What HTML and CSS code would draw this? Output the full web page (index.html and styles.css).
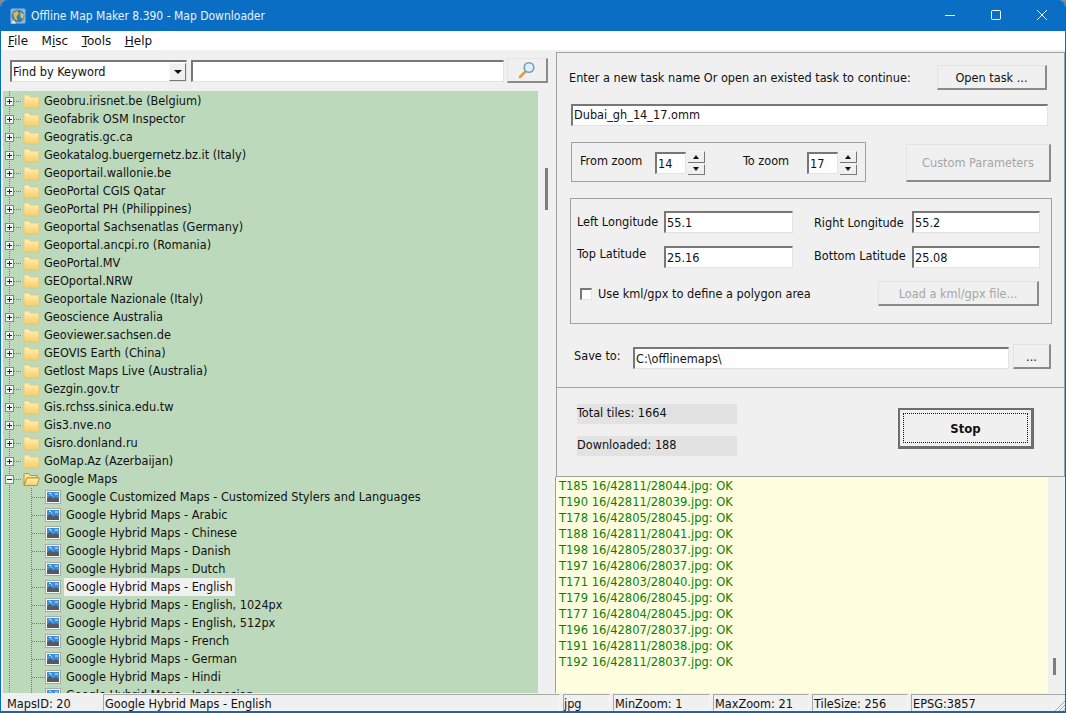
FILE: index.html
```html
<!DOCTYPE html>
<html lang="en">
<head>
    <meta charset="UTF-8">
    <title>Offline Map Maker 8.390 - Map Downloader</title>
    <link rel="stylesheet" href="styles.css">
</head>
<body>
    <svg class="defs" width="0" height="0">
        <defs>
            <linearGradient id="folder-fill" x1="0" y1="0" x2="0" y2="1">
                <stop offset="0" stop-color="#fff1bd"/>
                <stop offset="1" stop-color="#f8cd66"/>
            </linearGradient>
            <symbol id="folder" viewBox="0 0 17 15">
                <path d="M1 3.5 L1 2 Q1 1 2 1 L6 1 L7.5 3 L15 3 Q16 3 16 4 L16 13 Q16 14 15 14 L2 14 Q1 14 1 13 Z" fill="url(#folder-fill)" stroke="#e8c064" stroke-width=".7"/>
            </symbol>
            <symbol id="folder-open" viewBox="0 0 17 15">
                <path d="M1 13 L1 2.5 Q1 1.5 2 1.5 L6 1.5 L7.5 3.5 L14 3.5 L14 6 L4 6 Z" fill="#fbe39a" stroke="#c08a1e" stroke-width=".9"/>
                <path d="M1 13.5 L4 6 L16.5 6 L14 13.5 Z" fill="url(#folder-fill)" stroke="#c08a1e" stroke-width=".9"/>
            </symbol>
            <symbol id="map" viewBox="0 0 16 14">
                <rect x=".5" y=".5" width="15" height="13" fill="#f6f6f6" stroke="#a8a8a8"/>
                <rect x="2" y="2" width="12" height="10" fill="#3f8fd8"/>
                <path d="M4 3.5h2M10 4h3M6 5h1" stroke="#e2f2fd" stroke-width="1"/>
                <path d="M2 12 L2 8.5 L5 6 L8 8.5 L11 7 L14 9 L14 12 Z" fill="#55585c"/>
            </symbol>
        </defs>
    </svg>

    <div class="window">
        <header class="titlebar">
            <svg class="app-icon" width="16" height="16" viewBox="0 0 16 16">
                <rect x=".5" y=".5" width="15" height="15" rx="1.5" fill="#8fb6d2"/>
                <circle cx="8" cy="8" r="6.3" fill="#2f7fb8"/>
                <path d="M3 5.5 L7 2.5 L9 5.5 L6.5 8.5 L7.5 13 L4.5 11 Z" fill="#e2b544"/>
                <path d="M10 4 L14 6.5 L13 11 L10.5 9.5 Z" fill="#d8c25a"/>
                <path d="M.5 15.5 L4 12 L6 15.5 Z" fill="#f0e8c0"/>
            </svg>
            <span class="title-text">Offline Map Maker 8.390 - Map Downloader</span>
            <div class="window-buttons">
                <svg width="46" height="31" viewBox="0 0 46 31"><path d="M18 15.5h10" stroke="#fff"/></svg>
                <svg width="46" height="31" viewBox="0 0 46 31"><rect x="18.5" y="10.5" width="9" height="9" rx="1" fill="none" stroke="#fff"/></svg>
                <svg width="46" height="31" viewBox="0 0 46 31"><path d="M18 10 L28 20 M28 10 L18 20" stroke="#fff"/></svg>
            </div>
        </header>

        <nav class="menubar">
            <span><u>F</u>ile</span>
            <span>M<u>i</u>sc</span>
            <span><u>T</u>ools</span>
            <span><u>H</u>elp</span>
        </nav>

        <main class="content">
            <section class="left-pane">
                <div class="search-bar">
                    <div class="combo">
                        <span class="combo-text">Find by Keyword</span>
                        <span class="combo-arrow"></span>
                    </div>
                    <input class="field search-field" type="text">
                    <button class="btn search-btn">
                        <svg width="18" height="18" viewBox="0 0 18 18">
                            <path d="M2 16 L7 11" stroke="#e8993f" stroke-width="2.6" stroke-linecap="round"/>
                            <circle cx="11" cy="6.5" r="4.8" fill="#dcf0fb" stroke="#6f9fc0" stroke-width="1.6"/>
                        </svg>
                    </button>
                </div>
                <div class="tree-area">
                    <ul class="tree">
                        <li class="node"><span class="exp plus"></span><svg class="ico"><use href="#folder"/></svg><span class="lbl">Geobru.irisnet.be (Belgium)</span></li>
                        <li class="node"><span class="exp plus"></span><svg class="ico"><use href="#folder"/></svg><span class="lbl">Geofabrik OSM Inspector</span></li>
                        <li class="node"><span class="exp plus"></span><svg class="ico"><use href="#folder"/></svg><span class="lbl">Geogratis.gc.ca</span></li>
                        <li class="node"><span class="exp plus"></span><svg class="ico"><use href="#folder"/></svg><span class="lbl">Geokatalog.buergernetz.bz.it (Italy)</span></li>
                        <li class="node"><span class="exp plus"></span><svg class="ico"><use href="#folder"/></svg><span class="lbl">Geoportail.wallonie.be</span></li>
                        <li class="node"><span class="exp plus"></span><svg class="ico"><use href="#folder"/></svg><span class="lbl">GeoPortal CGIS Qatar</span></li>
                        <li class="node"><span class="exp plus"></span><svg class="ico"><use href="#folder"/></svg><span class="lbl">GeoPortal PH (Philippines)</span></li>
                        <li class="node"><span class="exp plus"></span><svg class="ico"><use href="#folder"/></svg><span class="lbl">Geoportal Sachsenatlas (Germany)</span></li>
                        <li class="node"><span class="exp plus"></span><svg class="ico"><use href="#folder"/></svg><span class="lbl">Geoportal.ancpi.ro (Romania)</span></li>
                        <li class="node"><span class="exp plus"></span><svg class="ico"><use href="#folder"/></svg><span class="lbl">GeoPortal.MV</span></li>
                        <li class="node"><span class="exp plus"></span><svg class="ico"><use href="#folder"/></svg><span class="lbl">GEOportal.NRW</span></li>
                        <li class="node"><span class="exp plus"></span><svg class="ico"><use href="#folder"/></svg><span class="lbl">Geoportale Nazionale (Italy)</span></li>
                        <li class="node"><span class="exp plus"></span><svg class="ico"><use href="#folder"/></svg><span class="lbl">Geoscience Australia</span></li>
                        <li class="node"><span class="exp plus"></span><svg class="ico"><use href="#folder"/></svg><span class="lbl">Geoviewer.sachsen.de</span></li>
                        <li class="node"><span class="exp plus"></span><svg class="ico"><use href="#folder"/></svg><span class="lbl">GEOVIS Earth (China)</span></li>
                        <li class="node"><span class="exp plus"></span><svg class="ico"><use href="#folder"/></svg><span class="lbl">Getlost Maps Live (Australia)</span></li>
                        <li class="node"><span class="exp plus"></span><svg class="ico"><use href="#folder"/></svg><span class="lbl">Gezgin.gov.tr</span></li>
                        <li class="node"><span class="exp plus"></span><svg class="ico"><use href="#folder"/></svg><span class="lbl">Gis.rchss.sinica.edu.tw</span></li>
                        <li class="node"><span class="exp plus"></span><svg class="ico"><use href="#folder"/></svg><span class="lbl">Gis3.nve.no</span></li>
                        <li class="node"><span class="exp plus"></span><svg class="ico"><use href="#folder"/></svg><span class="lbl">Gisro.donland.ru</span></li>
                        <li class="node"><span class="exp plus"></span><svg class="ico"><use href="#folder"/></svg><span class="lbl">GoMap.Az (Azerbaijan)</span></li>
                        <li class="node"><span class="exp minus"></span><svg class="ico"><use href="#folder-open"/></svg><span class="lbl">Google Maps</span></li>
                        <li class="node child"><svg class="ico"><use href="#map"/></svg><span class="lbl">Google Customized Maps - Customized Stylers and Languages</span></li>
                        <li class="node child"><svg class="ico"><use href="#map"/></svg><span class="lbl">Google Hybrid Maps - Arabic</span></li>
                        <li class="node child"><svg class="ico"><use href="#map"/></svg><span class="lbl">Google Hybrid Maps - Chinese</span></li>
                        <li class="node child"><svg class="ico"><use href="#map"/></svg><span class="lbl">Google Hybrid Maps - Danish</span></li>
                        <li class="node child"><svg class="ico"><use href="#map"/></svg><span class="lbl">Google Hybrid Maps - Dutch</span></li>
                        <li class="node child selected"><svg class="ico"><use href="#map"/></svg><span class="lbl">Google Hybrid Maps - English</span></li>
                        <li class="node child"><svg class="ico"><use href="#map"/></svg><span class="lbl">Google Hybrid Maps - English, 1024px</span></li>
                        <li class="node child"><svg class="ico"><use href="#map"/></svg><span class="lbl">Google Hybrid Maps - English, 512px</span></li>
                        <li class="node child"><svg class="ico"><use href="#map"/></svg><span class="lbl">Google Hybrid Maps - French</span></li>
                        <li class="node child"><svg class="ico"><use href="#map"/></svg><span class="lbl">Google Hybrid Maps - German</span></li>
                        <li class="node child"><svg class="ico"><use href="#map"/></svg><span class="lbl">Google Hybrid Maps - Hindi</span></li>
                        <li class="node child"><svg class="ico"><use href="#map"/></svg><span class="lbl">Google Hybrid Maps - Indonesian</span></li>
                    </ul>
                    <div class="scroll-track"><div class="tree-thumb"></div></div>
                </div>
            </section>

            <section class="right-pane">
                <div class="task-panel">
                    <div class="task-head">
                        <span>Enter a new task name Or open an existed task to continue:</span>
                        <button class="btn open-btn">Open task ...</button>
                    </div>
                    <input class="field task-name" type="text" value="Dubai_gh_14_17.omm">

                    <div class="zoom-row">
                        <div class="group zoom-group">
                            <span class="from-label">From zoom</span>
                            <input class="field zoom-field" type="text" value="14">
                            <div class="spin"><span class="spin-up"></span><span class="spin-down"></span></div>
                            <span class="to-label">To zoom</span>
                            <input class="field zoom-field" type="text" value="17">
                            <div class="spin"><span class="spin-up"></span><span class="spin-down"></span></div>
                        </div>
                        <button class="btn custom-btn" disabled>Custom Parameters</button>
                    </div>

                    <div class="group coord-group">
                        <div class="coord-grid">
                            <span class="lift-sm">Left Longitude</span>
                            <input class="field coord-field" type="text" value="55.1">
                            <span class="right-col">Right Longitude</span>
                            <input class="field coord-field" type="text" value="55.2">
                            <span class="lift-lg">Top Latitude</span>
                            <input class="field coord-field" type="text" value="25.16">
                            <span class="right-col lift-md">Bottom Latitude</span>
                            <input class="field coord-field" type="text" value="25.08">
                        </div>
                        <div class="poly-row">
                            <label class="check-label"><span class="checkbox"></span>Use kml/gpx to define a polygon area</label>
                            <button class="btn load-btn" disabled>Load a kml/gpx file...</button>
                        </div>
                    </div>

                    <div class="save-row">
                        <span class="save-label">Save to:</span>
                        <input class="field save-field" type="text" value="C:\offlinemaps\">
                        <button class="btn dots-btn">...</button>
                    </div>
                </div>

                <div class="progress-panel">
                    <div class="counts">
                        <div class="count">Total tiles: 1664</div>
                        <div class="count">Downloaded: 188</div>
                    </div>
                    <button class="btn stop-btn"><span>Stop</span></button>
                </div>

                <div class="log-area">
                    <div class="log">
                        <div>T185 16/42811/28044.jpg: OK</div>
                        <div>T190 16/42811/28039.jpg: OK</div>
                        <div>T178 16/42805/28045.jpg: OK</div>
                        <div>T188 16/42811/28041.jpg: OK</div>
                        <div>T198 16/42805/28037.jpg: OK</div>
                        <div>T197 16/42806/28037.jpg: OK</div>
                        <div>T171 16/42803/28040.jpg: OK</div>
                        <div>T179 16/42806/28045.jpg: OK</div>
                        <div>T177 16/42804/28045.jpg: OK</div>
                        <div>T196 16/42807/28037.jpg: OK</div>
                        <div>T191 16/42811/28038.jpg: OK</div>
                        <div>T192 16/42811/28037.jpg: OK</div>
                    </div>
                    <div class="log-scroll"><div class="log-thumb"></div></div>
                </div>
            </section>
        </main>

        <footer class="statusbar">
            <div class="cell plain s-id">MapsID: 20</div>
            <div class="cell s-name">Google Hybrid Maps - English</div>
            <div class="cell s-ext">jpg</div>
            <div class="cell s-min">MinZoom: 1</div>
            <div class="cell s-std">MaxZoom: 21</div>
            <div class="cell s-std">TileSize: 256</div>
            <div class="cell s-last">EPSG:3857
                <svg class="grip" width="11" height="11" viewBox="0 0 11 11"><path d="M1 11 L11 1 M5 11 L11 5 M9 11 L11 9" stroke="#a8a8a8"/></svg>
            </div>
        </footer>
    </div>
</body>
</html>
```

FILE: styles.css
```css
* {
    margin: 0;
    padding: 0;
    box-sizing: border-box;
}

html, body {
    height: 100%;
    overflow: hidden;
}

body {
    background: #8a8a8a;
    font-family: "DejaVu Sans Condensed", "DejaVu Sans", sans-serif;
    font-size: 12.6px;
    color: #111;
}

.defs {
    position: absolute;
}

.window {
    height: 713px;
    display: flex;
    flex-direction: column;
    overflow: hidden;
    background: #f0f0f0;
    border-radius: 7px 7px 0 0;
    border-left: 1px solid #0a6cc0;
    border-right: 1px solid #0a6cc0;
    border-bottom: 2px solid #0a6cc0;
}

/* title bar */
.titlebar {
    height: 31px;
    flex: none;
    display: flex;
    align-items: center;
    background: #0a6fc4;
    color: #fff;
    padding-left: 9px;
}

.app-icon {
    margin-right: 5px;
}

.title-text {
    flex: 1;
    font-size: 12px;
    color: #e8f2fb;
}

.window-buttons {
    display: flex;
}

.menubar {
    height: 19px;
    flex: none;
    background: #fff;
    display: flex;
    gap: 13.5px;
    padding-left: 7px;
    align-items: center;
    font-family: "DejaVu Sans", sans-serif;
    font-size: 12px;
}

.content {
    flex: 1;
    display: flex;
    min-height: 0;
}

/* left side */
.left-pane {
    width: 555px;
    flex: none;
    display: flex;
    flex-direction: column;
}

.search-bar {
    height: 41px;
    flex: none;
    display: flex;
    align-items: flex-start;
    padding: 10px 0 0 9px;
}

.field {
    border: 1px solid #e3e3e3;
    border-top: 2px solid #777;
    border-left: 2px solid #777;
    background: #fff;
    font: inherit;
    color: #111;
    padding: 0 1px;
    outline: none;
    height: 22px;
}

.combo {
    width: 177px;
    height: 22px;
    display: flex;
    align-items: center;
    justify-content: space-between;
    background: #fff;
    border: 1px solid #e3e3e3;
    border-top: 2px solid #777;
    border-left: 2px solid #777;
    padding-left: 1px;
}

.combo-arrow {
    width: 17px;
    height: 18px;
    background: #f0f0f0;
    border: 1px solid #f8f8f8;
    border-right-color: #777;
    border-bottom-color: #777;
    position: relative;
}

.combo-arrow::after {
    content: "";
    position: absolute;
    left: 4px;
    top: 6px;
    border: 4px solid transparent;
    border-top: 4px solid #111;
}

.search-field {
    width: 313px;
    margin-left: 4px;
}

.btn {
    background: #f0f0f0;
    border: 1px solid #e4e4e4;
    border-right: 2px solid #8a8a8a;
    border-bottom: 2px solid #8a8a8a;
    font: inherit;
    color: #111;
}

.btn:disabled {
    color: #a6a6a6;
}

.search-btn {
    width: 41px;
    height: 25px;
    margin: -2px 0 0 3px;
    display: flex;
    align-items: center;
    justify-content: center;
}

.tree-area {
    flex: 1;
    min-height: 0;
    display: flex;
    padding-left: 2px;
}

.tree {
    width: 535px;
    flex: none;
    list-style: none;
    overflow: hidden;
    padding-top: 1px;
    background-color: #bdd9bc;
    background-image: repeating-linear-gradient(to bottom, #6f7f6f 0 1px, transparent 1px 2px);
    background-size: 1px 100%;
    background-position: 6px 0;
    background-repeat: no-repeat;
}

.node {
    height: 18px;
    display: flex;
    align-items: center;
    white-space: nowrap;
    padding-left: 2px;
}

.exp {
    width: 9px;
    height: 9px;
    flex: none;
    margin-right: 9px;
    border: 1px solid #7d8a7d;
    background: #f4f8f4;
    position: relative;
}

.exp::before {
    content: "";
    position: absolute;
    left: 1px;
    top: 3px;
    width: 5px;
    height: 1px;
    background: #222;
}

.plus::after {
    content: "";
    position: absolute;
    left: 3px;
    top: 1px;
    width: 1px;
    height: 5px;
    background: #222;
}

/* dotted stub from the expander over to the icon */
.node:not(.child) {
    background-image: repeating-linear-gradient(to right, #6f7f6f 0 1px, transparent 1px 2px);
    background-size: 8px 1px;
    background-position: 11px 9px;
    background-repeat: no-repeat;
}

.ico {
    width: 17px;
    height: 15px;
    flex: none;
    margin-right: 2px;
}

.child {
    padding-left: 42px;
    background-image:
        repeating-linear-gradient(to bottom, #6f7f6f 0 1px, transparent 1px 2px),
        repeating-linear-gradient(to right, #6f7f6f 0 1px, transparent 1px 2px);
    background-size: 1px 18px, 13px 1px;
    background-position: 28px 0, 29px 9px;
    background-repeat: no-repeat;
}

.child .ico {
    width: 16px;
    height: 14px;
    margin-right: 3px;
}

.lbl {
    padding: 0 2px;
    line-height: 18px;
}

.selected .lbl {
    background: #f1f1f1;
}

.scroll-track {
    flex: 1;
    position: relative;
}

.tree-thumb {
    position: absolute;
    left: 7px;
    top: 77px;
    width: 3px;
    height: 42px;
    background: #7d7d7d;
}

/* right side */
.right-pane {
    flex: 1;
    display: flex;
    flex-direction: column;
    min-width: 0;
    margin-top: 2px;
}

.task-panel {
    height: 336px;
    flex: none;
    border: 1px solid #a0a0a0;
    padding: 12px 13px 0 12px;
}

.task-head {
    display: flex;
    justify-content: space-between;
    align-items: center;
    padding-right: 4px;
}

.open-btn {
    width: 110px;
    height: 25px;
}

.task-name {
    display: block;
    width: 477px;
    margin: 14px 0 0 2px;
    padding-bottom: 2px;
}

.zoom-row {
    display: flex;
    align-items: flex-start;
    justify-content: space-between;
    margin-top: 16px;
    padding-left: 2px;
}

.group {
    border: 1px solid #a0a0a0;
}

.zoom-group {
    width: 295px;
    height: 40px;
    display: flex;
    align-items: center;
    padding-left: 8px;
}

.from-label {
    width: 75px;
    margin-top: -4px;
}

.to-label {
    width: 64px;
    margin: -4px 0 0 38px;
}

.zoom-field {
    width: 31px;
    margin-top: 2px;
}

.spin {
    width: 17px;
    height: 24px;
    margin: 2px 0 0 2px;
    display: flex;
    flex-direction: column;
    gap: 1px;
}

.spin span {
    flex: 1;
    background: #f0f0f0;
    border-right: 1px solid #777;
    border-bottom: 1px solid #777;
    border-top: 1px solid #fafafa;
    display: flex;
    align-items: center;
    justify-content: center;
}

.spin-up::after {
    content: "";
    border: 3px solid transparent;
    border-bottom: 4px solid #111;
    border-top: 0;
}

.spin-down::after {
    content: "";
    border: 3px solid transparent;
    border-top: 4px solid #111;
    border-bottom: 0;
}

.custom-btn {
    width: 145px;
    height: 38px;
    margin-top: 2px;
}

.coord-group {
    width: 482px;
    height: 126px;
    margin: 16px 0 0 1px;
    padding: 12px 12px 0 6px;
}

.coord-grid {
    display: grid;
    grid-template-columns: 87px 129px 119px 128px;
    row-gap: 13px;
    align-items: center;
}

.right-col {
    padding-left: 21px;
}

.lift-sm {
    margin-top: -2px;
}

.lift-md {
    margin-top: -3px;
}

.lift-lg {
    margin-top: -7px;
}

.coord-field {
    width: 100%;
}

.poly-row {
    display: flex;
    justify-content: space-between;
    align-items: center;
    margin-top: 13px;
}

.check-label {
    display: flex;
    align-items: center;
    padding-left: 3px;
}

.checkbox {
    width: 12px;
    height: 12px;
    margin-right: 6px;
    background: #fff;
    border: 1px solid #e3e3e3;
    border-top: 2px solid #777;
    border-left: 2px solid #777;
}

.load-btn {
    width: 161px;
    height: 25px;
}

.save-row {
    display: flex;
    align-items: center;
    margin-top: 20px;
    padding-left: 5px;
}

.save-label {
    width: 59px;
    margin-top: -2px;
}

.save-field {
    width: 376px;
    margin-top: 3px;
}

.dots-btn {
    width: 38px;
    height: 25px;
    margin-left: 4px;
}

.progress-panel {
    height: 89px;
    flex: none;
    display: flex;
    justify-content: space-between;
    align-items: center;
    border: 1px solid #a0a0a0;
    border-top: 0;
    padding: 0 30px 4px 20px;
}

.counts {
    display: flex;
    flex-direction: column;
    gap: 12px;
}

.count {
    width: 160px;
    height: 20px;
    line-height: 18px;
    background: #e2e2e2;
}

.stop-btn {
    width: 136px;
    height: 41px;
    margin-top: -3px;
    padding: 3px;
    background: #f0f0f0;
    border: 2px solid #6e6e6e;
    border-right-width: 3px;
    border-bottom-width: 3px;
    font-size: 13px;
    font-weight: bold;
}

.stop-btn span {
    display: flex;
    height: 100%;
    align-items: center;
    justify-content: center;
    border: 1px dotted #111;
}

.log-area {
    flex: 1;
    min-height: 0;
    display: flex;
}

.log {
    width: 493px;
    flex: none;
    margin-left: -1px;
    background: #ffffdf;
    border-left: 1px solid #a0a0a0;
    color: #0a800a;
    font-size: 12.8px;
    padding: 1px 0 0 3px;
    line-height: 16px;
    white-space: nowrap;
    overflow: hidden;
}

.log-scroll {
    flex: 1;
    position: relative;
}

.log-thumb {
    position: absolute;
    left: 5px;
    top: 181px;
    width: 3px;
    height: 17px;
    background: #7d7d7d;
}

/* status bar */
.statusbar {
    height: 18px;
    flex: none;
    display: flex;
    gap: 3px;
    padding: 1px 0 0 2px;
}

.cell {
    border: 1px solid #f6f6f6;
    border-top-color: #a8a8a8;
    border-left-color: #a8a8a8;
    padding-left: 1px;
    line-height: 17px;
    white-space: nowrap;
}

.cell.plain {
    border-color: #f0f0f0;
}

.s-id { width: 97px; padding-left: 3px; }
.s-name { width: 457px; }
.s-ext { width: 47px; padding-left: 0; }
.s-min { width: 97px; }
.s-std { width: 96px; }

.s-last {
    flex: 1;
    position: relative;
    border-right: 0;
    border-bottom: 0;
}

.grip {
    position: absolute;
    right: 0;
    bottom: 0;
}
```
